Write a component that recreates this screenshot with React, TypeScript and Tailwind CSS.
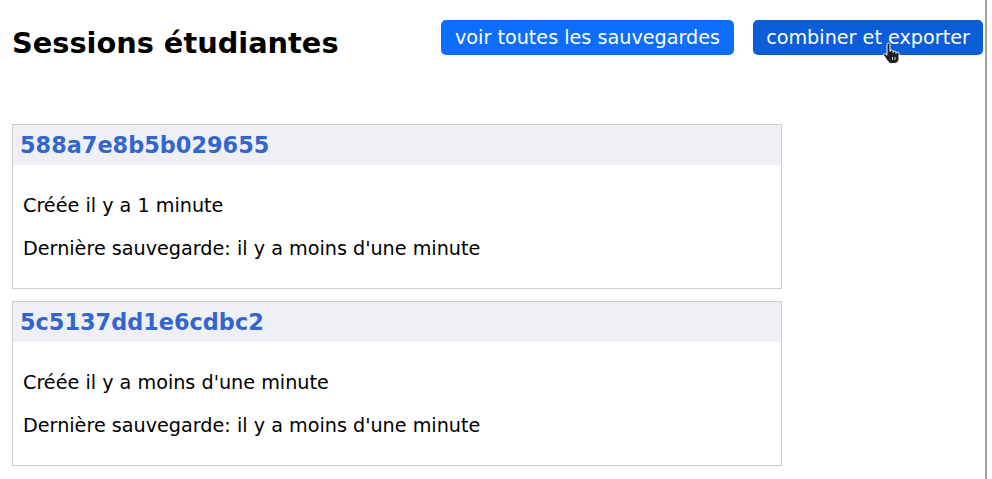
import React from "react";

const font = { fontFamily: '"DejaVu Sans", "Liberation Sans", sans-serif' };

function Card({ id, created, saved }: { id: string; created: string; saved: string }) {
  return (
    <div className="w-[770px] border border-[#cccccc] bg-white">
      <div className="h-[40px] bg-[#eef0f6] px-[7px] flex items-center">
        <h3 className="text-[22.4px] leading-[26px] font-bold text-[#3366cc]">{id}</h3>
      </div>
      <div className="px-[10px] pt-[30px] pb-[28px] flex flex-col gap-[21px] text-[19.2px] leading-[22px] text-black">
        <p>{created}</p>
        <p>{saved}</p>
      </div>
    </div>
  );
}

export default function App() {
  return (
    <div className="relative flex w-[992px] h-[479px] bg-white overflow-hidden" style={font}>
      <div className="w-[987px] h-[479px] border-r-2 border-[#a3a3a3] pl-[12px] pr-[2px]">
        <div className="flex items-start justify-between">
          <h2 className="mt-[26px] text-[28.8px] leading-[34px] font-bold text-black">Sessions étudiantes</h2>
          <div className="mt-[20px] flex gap-[19px]">
            <button className="h-[35px] w-[293px] rounded-[5px] bg-[#0d6efd] text-white text-[19.2px] leading-[22px] flex items-center justify-center">
              voir toutes les sauvegardes
            </button>
            <button className="h-[35px] w-[230px] rounded-[5px] bg-[#0b5ed7] text-white text-[19.2px] leading-[22px] flex items-center justify-center">
              combiner et exporter
            </button>
          </div>
        </div>
        <div className="mt-[64px] flex flex-col gap-[12px]">
          <Card id="588a7e8b5b029655" created="Créée il y a 1 minute" saved="Dernière sauvegarde: il y a moins d'une minute" />
          <Card id="5c5137dd1e6cdbc2" created="Créée il y a moins d'une minute" saved="Dernière sauvegarde: il y a moins d'une minute" />
        </div>
      </div>
      <svg className="absolute left-[882px] top-[42px]" width="19" height="23" viewBox="0 0 19 23">
        <path
          d="M5 2.5 a1.5 1.5 0 0 1 3 0 V9.5 a1.5 1.5 0 0 1 3 0 V10.5 a1.5 1.5 0 0 1 3 0 V11.5 a1.5 1.5 0 0 1 3 0 V16.5 c0 3 -2 5 -5 5 H9.5 c-2 0 -3 -1 -4 -2.5 L1.8 13.5 c-0.8 -1.2 0.8 -2.6 1.8 -1.6 L5 13.2 Z"
          fill="#1f1f1f"
          stroke="#ffffff"
          strokeWidth="1"
          strokeLinejoin="round"
        />
        <path d="M10.5 15 V18 M13 15 V18" stroke="#ffffff" strokeWidth="0.8" />
      </svg>
    </div>
  );
}
